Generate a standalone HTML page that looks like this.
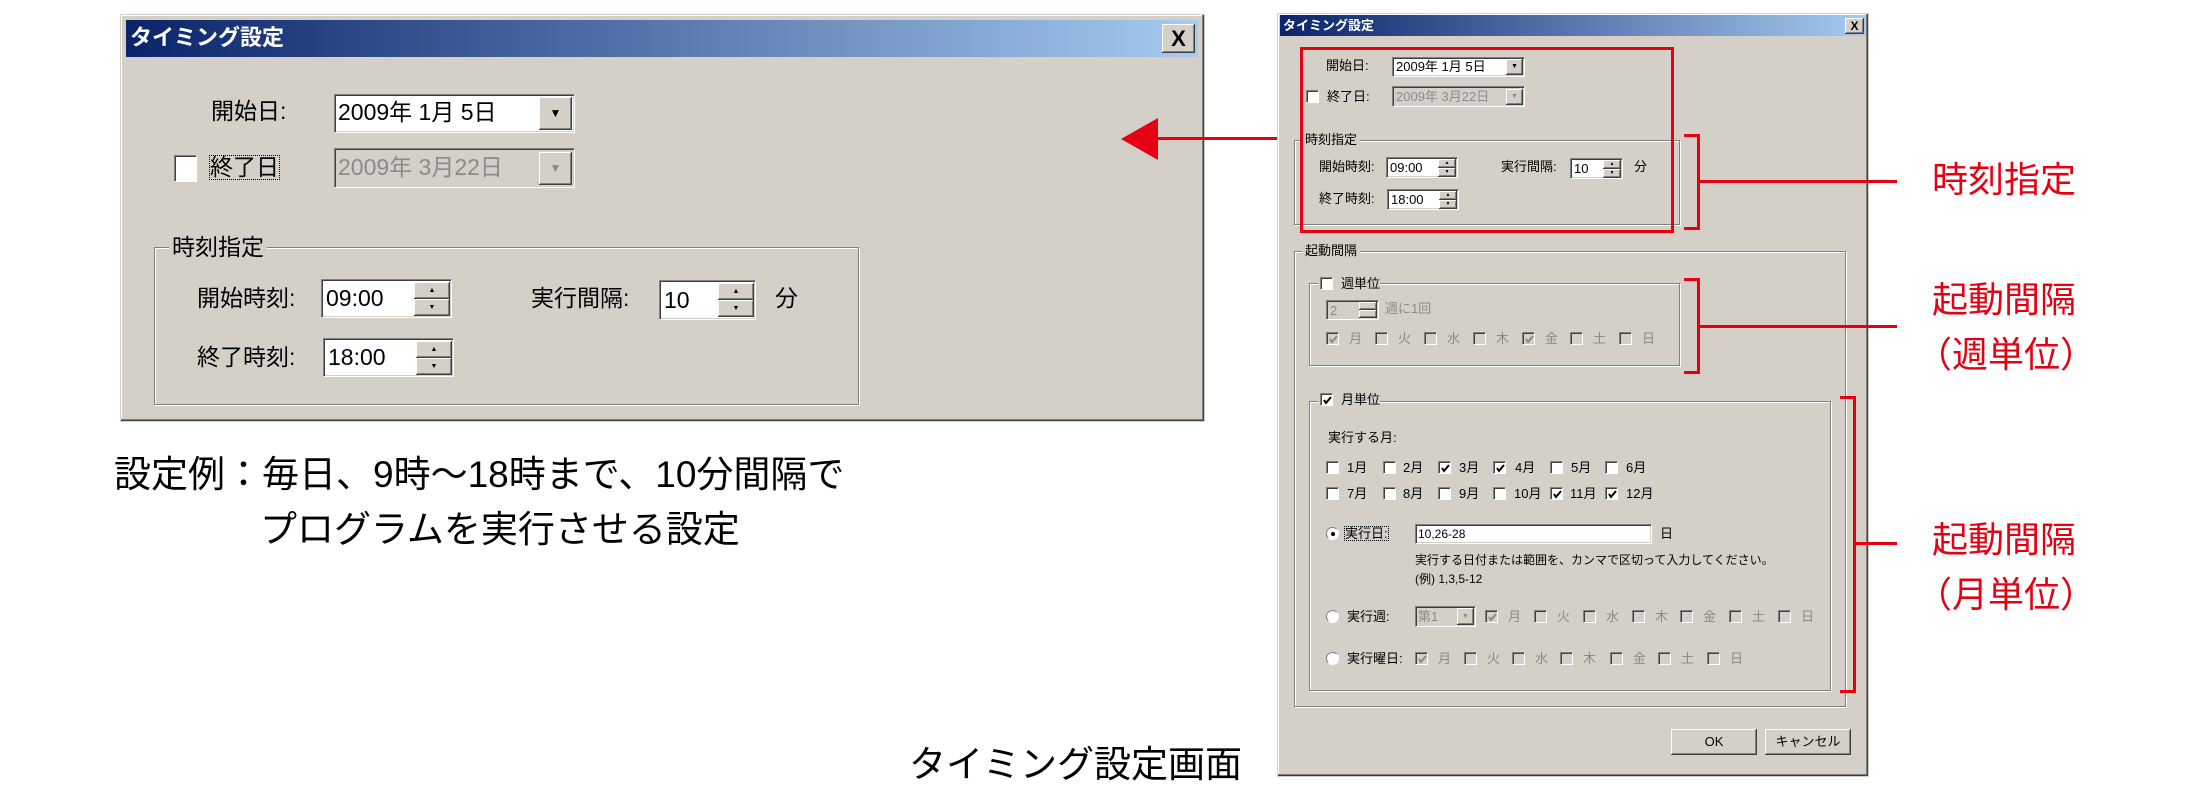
<!DOCTYPE html>
<html><head><meta charset="utf-8"><style>
*{margin:0;padding:0;box-sizing:border-box}
body{width:2200px;height:800px;background:#fff;position:relative;overflow:hidden;font-family:"Liberation Sans","Noto Sans CJK JP",sans-serif;color:#000}
.a{position:absolute;white-space:nowrap;line-height:1}
.dlg{position:absolute;background:#d4d0c8;border:1px solid #d4d0c8;box-shadow:inset -1px -1px #404040,inset -2px -2px #808080,inset 1px 1px #fff}
.tb{position:absolute;background:linear-gradient(90deg,#0a246a,#a6caf0);color:#fff;font-weight:bold}
.btn{position:absolute;background:#d4d0c8;box-shadow:inset -1px -1px #404040,inset 1px 1px #fff,inset -2px -2px #808080;text-align:center}
.sunk{position:absolute;background:#fff;border:1px solid;border-color:#808080 #fff #fff #808080;box-shadow:inset 1px 1px #404040,inset -1px -1px #d4d0c8}
.dis{background:#d4d0c8;color:#8a8a8a}
.grp{position:absolute;border:1px solid #808080;box-shadow:1px 1px 0 #fff,inset 1px 1px 0 #fff}
.lbl{position:absolute;background:#d4d0c8;line-height:1;white-space:nowrap;padding:0 3px}
.cb{position:absolute;width:13px;height:13px;background:#fff;border:1px solid;border-color:#808080 #fff #fff #808080;box-shadow:inset 1px 1px #404040}
.cb.g{background:#d4d0c8}
.cb svg{position:absolute;left:1px;top:1px}
.rd{position:absolute;width:13px;height:13px;border-radius:50%;background:#fff;border:1px solid;border-color:#808080 #fff #fff #808080}
.red{position:absolute;background:#e60012}
.rl{position:absolute;color:#e60012;font-size:36px;line-height:1;white-space:nowrap}
.s{font-size:13px}
.gr{color:#8a8a8a}
</style></head><body>

<!-- LEFT DIALOG -->
<div class="dlg" style="left:120px;top:14px;width:1085px;height:408px"></div>
<div class="tb a" style="left:126px;top:20px;width:1072px;height:37px;font-size:22px;padding:7px 4px">タイミング設定</div>
<div class="btn" style="left:1162px;top:24px;width:33px;height:29px;font-size:22px;font-weight:bold;line-height:29px">X</div>
<div class="a" style="left:211px;top:100px;font-size:23px">開始日:</div>
<div class="sunk" style="left:334px;top:94px;width:241px;height:39px"></div>
<div class="a" style="left:338px;top:101px;font-size:23px">2009年 1月 5日</div>
<div class="btn" style="left:539px;top:97px;width:33px;height:33px;font-size:12px;line-height:33px">▼</div>
<div class="cb" style="left:174px;top:155px;width:23px;height:27px"></div>
<div class="a" style="left:210px;top:156px;font-size:23px;outline:1px dotted #000">終了日</div>
<div class="sunk dis" style="left:334px;top:148px;width:241px;height:40px;background:#d4d0c8"></div>
<div class="a gr" style="left:338px;top:156px;font-size:23px">2009年 3月22日</div>
<div class="btn" style="left:539px;top:152px;width:33px;height:33px;font-size:12px;line-height:33px;color:#8a8a8a">▼</div>
<div class="grp" style="left:154px;top:247px;width:705px;height:158px"></div>
<div class="lbl" style="left:169px;top:236px;font-size:23px">時刻指定</div>
<div class="a" style="left:197px;top:287px;font-size:23px">開始時刻:</div>
<div class="sunk" style="left:321px;top:279px;width:131px;height:39px"></div>
<div class="a" style="left:326px;top:287px;font-size:23px">09:00</div>
<div class="btn" style="left:414px;top:282px;width:36px;height:17px;font-size:7px;line-height:17px">▲</div>
<div class="btn" style="left:414px;top:299px;width:36px;height:17px;font-size:7px;line-height:17px">▼</div>
<div class="a" style="left:531px;top:287px;font-size:23px">実行間隔:</div>
<div class="sunk" style="left:659px;top:280px;width:97px;height:40px"></div>
<div class="a" style="left:664px;top:289px;font-size:23px">10</div>
<div class="btn" style="left:718px;top:283px;width:36px;height:17px;font-size:7px;line-height:17px">▲</div>
<div class="btn" style="left:718px;top:300px;width:36px;height:17px;font-size:7px;line-height:17px">▼</div>
<div class="a" style="left:775px;top:287px;font-size:23px">分</div>
<div class="a" style="left:197px;top:346px;font-size:23px">終了時刻:</div>
<div class="sunk" style="left:323px;top:338px;width:131px;height:39px"></div>
<div class="a" style="left:328px;top:346px;font-size:23px">18:00</div>
<div class="btn" style="left:416px;top:341px;width:36px;height:17px;font-size:7px;line-height:17px">▲</div>
<div class="btn" style="left:416px;top:358px;width:36px;height:17px;font-size:7px;line-height:17px">▼</div>

<div class="a" style="left:114px;top:456px;font-size:37px">設定例：毎日、9時～18時まで、10分間隔で</div>
<div class="a" style="left:260px;top:511px;font-size:37px">プログラムを実行させる設定</div>

<!-- arrow -->
<svg class="a" style="left:1118px;top:116px" width="45" height="46"><polygon points="3,23 40,2 40,44" fill="#e60012"/></svg>
<div class="red" style="left:1155px;top:137px;width:147px;height:3px"></div>

<!-- RIGHT DIALOG -->
<div class="dlg" style="left:1277px;top:13px;width:592px;height:764px"></div>
<div class="tb a" style="left:1280px;top:15px;width:586px;height:21px;font-size:13px;padding:4px 3px">タイミング設定</div>
<div class="btn" style="left:1845px;top:18px;width:19px;height:16px;font-size:12px;font-weight:bold;line-height:16px">X</div>

<div class="a s" style="left:1326px;top:59px">開始日:</div>
<div class="sunk" style="left:1392px;top:57px;width:133px;height:20px"></div>
<div class="a s" style="left:1396px;top:60px">2009年 1月 5日</div>
<div class="btn" style="left:1506px;top:59px;width:17px;height:16px;font-size:7px;line-height:16px">▼</div>
<div class="cb" style="left:1306px;top:90px"></div>
<div class="a s" style="left:1327px;top:90px">終了日:</div>
<div class="sunk" style="left:1392px;top:86px;width:133px;height:21px;background:#d4d0c8"></div>
<div class="a s gr" style="left:1396px;top:90px">2009年 3月22日</div>
<div class="btn" style="left:1506px;top:89px;width:17px;height:16px;font-size:7px;line-height:16px;color:#8a8a8a">▼</div>

<div class="grp" style="left:1294px;top:140px;width:386px;height:85px"></div>
<div class="lbl s" style="left:1302px;top:133px">時刻指定</div>
<div class="a s" style="left:1319px;top:160px">開始時刻:</div>
<div class="sunk" style="left:1386px;top:157px;width:72px;height:21px"></div>
<div class="a s" style="left:1390px;top:161px">09:00</div>
<div class="btn" style="left:1438px;top:159px;width:18px;height:9px;font-size:5px;line-height:9px">▲</div>
<div class="btn" style="left:1438px;top:168px;width:18px;height:9px;font-size:5px;line-height:9px">▼</div>
<div class="a s" style="left:1501px;top:160px">実行間隔:</div>
<div class="sunk" style="left:1570px;top:158px;width:53px;height:21px"></div>
<div class="a s" style="left:1574px;top:162px">10</div>
<div class="btn" style="left:1603px;top:160px;width:18px;height:9px;font-size:5px;line-height:9px">▲</div>
<div class="btn" style="left:1603px;top:169px;width:18px;height:9px;font-size:5px;line-height:9px">▼</div>
<div class="a s" style="left:1634px;top:160px">分</div>
<div class="a s" style="left:1319px;top:192px">終了時刻:</div>
<div class="sunk" style="left:1387px;top:189px;width:72px;height:21px"></div>
<div class="a s" style="left:1391px;top:193px">18:00</div>
<div class="btn" style="left:1439px;top:191px;width:18px;height:9px;font-size:5px;line-height:9px">▲</div>
<div class="btn" style="left:1439px;top:200px;width:18px;height:9px;font-size:5px;line-height:9px">▼</div>

<!-- red box -->
<div class="a" style="left:1300px;top:47px;width:374px;height:186px;border:3px solid #e60012"></div>

<div class="grp" style="left:1294px;top:251px;width:552px;height:456px"></div>
<div class="lbl s" style="left:1302px;top:244px">起動間隔</div>

<div class="grp" style="left:1309px;top:283px;width:371px;height:83px"></div>
<div class="lbl" style="left:1318px;top:275px;width:62px;height:18px"></div>
<div class="cb" style="left:1320px;top:277px"></div>
<div class="a s" style="left:1341px;top:277px">週単位</div>
<div class="sunk" style="left:1326px;top:300px;width:53px;height:20px;background:#d4d0c8"></div>
<div class="a s gr" style="left:1330px;top:304px">2</div>
<div class="btn" style="left:1359px;top:302px;width:18px;height:8px;font-size:4px"></div>
<div class="btn" style="left:1359px;top:310px;width:18px;height:8px;font-size:4px"></div>
<div class="a s gr" style="left:1385px;top:302px">週に1回</div>

<div class="grp" style="left:1309px;top:401px;width:522px;height:290px"></div>
<div class="lbl" style="left:1318px;top:392px;width:62px;height:18px"></div>
<div class="cb" style="left:1320px;top:393px"><svg width="11" height="11"><path d="M2 5 L4 8 L9 2" stroke="#000" stroke-width="2" fill="none"/></svg></div>
<div class="a s" style="left:1341px;top:393px">月単位</div>
<div class="a s" style="left:1328px;top:431px">実行する月:</div>

<div class="cb" style="left:1326px;top:461px"></div><div class="a s" style="left:1347px;top:461px">1月</div>
<div class="cb" style="left:1383px;top:461px"></div><div class="a s" style="left:1403px;top:461px">2月</div>
<div class="cb" style="left:1438px;top:461px"><svg width="11" height="11"><path d="M2 5 L4 8 L9 2" stroke="#000" stroke-width="2" fill="none"/></svg></div><div class="a s" style="left:1459px;top:461px">3月</div>
<div class="cb" style="left:1493px;top:461px"><svg width="11" height="11"><path d="M2 5 L4 8 L9 2" stroke="#000" stroke-width="2" fill="none"/></svg></div><div class="a s" style="left:1515px;top:461px">4月</div>
<div class="cb" style="left:1550px;top:461px"></div><div class="a s" style="left:1571px;top:461px">5月</div>
<div class="cb" style="left:1605px;top:461px"></div><div class="a s" style="left:1626px;top:461px">6月</div>

<div class="cb" style="left:1326px;top:487px"></div><div class="a s" style="left:1347px;top:487px">7月</div>
<div class="cb" style="left:1383px;top:487px"></div><div class="a s" style="left:1403px;top:487px">8月</div>
<div class="cb" style="left:1438px;top:487px"></div><div class="a s" style="left:1459px;top:487px">9月</div>
<div class="cb" style="left:1493px;top:487px"></div><div class="a s" style="left:1514px;top:487px">10月</div>
<div class="cb" style="left:1550px;top:487px"><svg width="11" height="11"><path d="M2 5 L4 8 L9 2" stroke="#000" stroke-width="2" fill="none"/></svg></div><div class="a s" style="left:1570px;top:487px">11月</div>
<div class="cb" style="left:1605px;top:487px"><svg width="11" height="11"><path d="M2 5 L4 8 L9 2" stroke="#000" stroke-width="2" fill="none"/></svg></div><div class="a s" style="left:1626px;top:487px">12月</div>

<div class="rd" style="left:1326px;top:527px"><div style="position:absolute;left:4px;top:4px;width:4px;height:4px;background:#000;border-radius:50%"></div></div>
<div class="a s" style="left:1345px;top:527px;outline:1px dotted #000">実行日:</div>
<div class="sunk" style="left:1415px;top:524px;width:237px;height:20px"></div>
<div class="a" style="left:1418px;top:528px;font-size:12px">10,26-28</div>
<div class="a s" style="left:1660px;top:527px">日</div>
<div class="a" style="left:1415px;top:554px;font-size:12px">実行する日付または範囲を、カンマで区切って入力してください。</div>
<div class="a" style="left:1415px;top:573px;font-size:12px">(例) 1,3,5-12</div>

<div class="rd" style="left:1326px;top:610px"></div>
<div class="a s" style="left:1347px;top:610px">実行週:</div>
<div class="sunk" style="left:1415px;top:606px;width:61px;height:21px;background:#d4d0c8"></div>
<div class="a s gr" style="left:1418px;top:610px">第1</div>
<div class="btn" style="left:1457px;top:608px;width:17px;height:17px;font-size:7px;line-height:17px;color:#8a8a8a">▼</div>

<div class="rd" style="left:1326px;top:652px"></div>
<div class="a s" style="left:1347px;top:652px">実行曜日:</div>

<div class="btn s" style="left:1671px;top:729px;width:86px;height:26px;line-height:26px">OK</div>
<div class="btn s" style="left:1765px;top:729px;width:86px;height:26px;line-height:26px">キャンセル</div>

<div class="cb g" style="left:1326px;top:332px"><svg width="11" height="11"><path d="M2 5 L4 8 L9 2" stroke="#8a8a8a" stroke-width="2" fill="none"/></svg></div><div class="a s gr" style="left:1349px;top:332px">月</div>
<div class="cb g" style="left:1375px;top:332px"></div><div class="a s gr" style="left:1398px;top:332px">火</div>
<div class="cb g" style="left:1424px;top:332px"></div><div class="a s gr" style="left:1447px;top:332px">水</div>
<div class="cb g" style="left:1473px;top:332px"></div><div class="a s gr" style="left:1496px;top:332px">木</div>
<div class="cb g" style="left:1522px;top:332px"><svg width="11" height="11"><path d="M2 5 L4 8 L9 2" stroke="#8a8a8a" stroke-width="2" fill="none"/></svg></div><div class="a s gr" style="left:1545px;top:332px">金</div>
<div class="cb g" style="left:1570px;top:332px"></div><div class="a s gr" style="left:1593px;top:332px">土</div>
<div class="cb g" style="left:1619px;top:332px"></div><div class="a s gr" style="left:1642px;top:332px">日</div>

<div class="cb g" style="left:1485px;top:610px"><svg width="11" height="11"><path d="M2 5 L4 8 L9 2" stroke="#8a8a8a" stroke-width="2" fill="none"/></svg></div><div class="a s gr" style="left:1508px;top:610px">月</div>
<div class="cb g" style="left:1534px;top:610px"></div><div class="a s gr" style="left:1557px;top:610px">火</div>
<div class="cb g" style="left:1583px;top:610px"></div><div class="a s gr" style="left:1606px;top:610px">水</div>
<div class="cb g" style="left:1632px;top:610px"></div><div class="a s gr" style="left:1655px;top:610px">木</div>
<div class="cb g" style="left:1680px;top:610px"></div><div class="a s gr" style="left:1703px;top:610px">金</div>
<div class="cb g" style="left:1729px;top:610px"></div><div class="a s gr" style="left:1752px;top:610px">土</div>
<div class="cb g" style="left:1778px;top:610px"></div><div class="a s gr" style="left:1801px;top:610px">日</div>

<div class="cb g" style="left:1415px;top:652px"><svg width="11" height="11"><path d="M2 5 L4 8 L9 2" stroke="#8a8a8a" stroke-width="2" fill="none"/></svg></div><div class="a s gr" style="left:1438px;top:652px">月</div>
<div class="cb g" style="left:1464px;top:652px"></div><div class="a s gr" style="left:1487px;top:652px">火</div>
<div class="cb g" style="left:1512px;top:652px"></div><div class="a s gr" style="left:1535px;top:652px">水</div>
<div class="cb g" style="left:1560px;top:652px"></div><div class="a s gr" style="left:1583px;top:652px">木</div>
<div class="cb g" style="left:1610px;top:652px"></div><div class="a s gr" style="left:1633px;top:652px">金</div>
<div class="cb g" style="left:1658px;top:652px"></div><div class="a s gr" style="left:1681px;top:652px">土</div>
<div class="cb g" style="left:1707px;top:652px"></div><div class="a s gr" style="left:1730px;top:652px">日</div>

<!-- brackets -->
<div class="a" style="left:1684px;top:134px;width:16px;height:96px;border:3px solid #e60012;border-left:none"></div>
<div class="red" style="left:1700px;top:180px;width:197px;height:3px"></div>
<div class="a" style="left:1684px;top:278px;width:16px;height:96px;border:3px solid #e60012;border-left:none"></div>
<div class="red" style="left:1700px;top:325px;width:197px;height:3px"></div>
<div class="a" style="left:1840px;top:396px;width:16px;height:297px;border:3px solid #e60012;border-left:none"></div>
<div class="red" style="left:1856px;top:542px;width:41px;height:3px"></div>

<div class="rl" style="left:1932px;top:162px">時刻指定</div>
<div class="rl" style="left:1932px;top:282px">起動間隔</div>
<div class="rl" style="left:1916px;top:337px">（週単位）</div>
<div class="rl" style="left:1932px;top:522px">起動間隔</div>
<div class="rl" style="left:1916px;top:577px">（月単位）</div>

<div class="a" style="left:909px;top:746px;font-size:37px">タイミング設定画面</div>
</body></html>
